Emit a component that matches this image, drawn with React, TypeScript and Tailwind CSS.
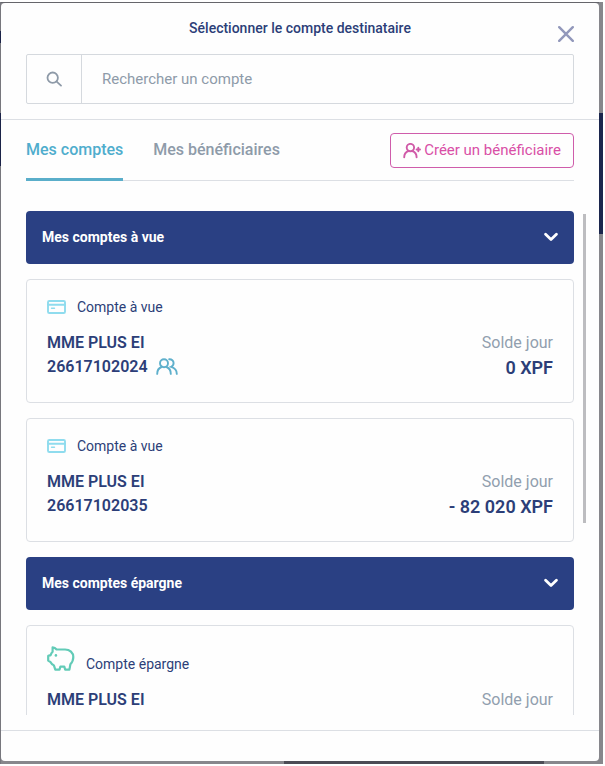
import React from "react";

type Account = {
  kind: "vue" | "epargne";
  label: string;
  owner: string;
  number: string;
  balance: string;
  shared?: boolean;
};

const currentAccounts: Account[] = [
  { kind: "vue", label: "Compte à vue", owner: "MME PLUS EI", number: "26617102024", balance: "0 XPF", shared: true },
  { kind: "vue", label: "Compte à vue", owner: "MME PLUS EI", number: "26617102035", balance: "- 82 020 XPF" },
];

const savingsAccounts: Account[] = [
  { kind: "epargne", label: "Compte épargne", owner: "MME PLUS EI", number: "", balance: "" },
];

function SearchIcon() {
  return (
    <svg className="size-4" viewBox="0 0 16 16" fill="none" stroke="#8e9aa8" strokeWidth="1.8" strokeLinecap="round" aria-hidden="true">
      <circle cx="6.7" cy="6.7" r="5.2" />
      <path d="M10.7 10.7 15 14.6" />
    </svg>
  );
}

function CloseIcon() {
  return (
    <svg className="size-4" viewBox="0 0 16 16" fill="none" stroke="#9298bb" strokeWidth="2.4" strokeLinecap="round" aria-hidden="true">
      <path d="M1.2 1.2 14.8 14.8M14.8 1.2 1.2 14.8" />
    </svg>
  );
}

function UserPlusIcon() {
  return (
    <svg className="h-4 w-[18px] shrink-0" viewBox="0 0 18 16" fill="none" stroke="#d05aa8" strokeWidth="1.9" strokeLinecap="round" aria-hidden="true">
      <circle cx="7.4" cy="4.6" r="3.7" />
      <path d="M1.2 14.2c0-3.200 1.600-5.200 4.200-6.200M13.600 14.2c0-3.200-1.600-5.200-4.200-6.200" />
      <path d="M13.600 6.500h3.400M15.300 4.800v3.400" />
    </svg>
  );
}

function UsersIcon() {
  return (
    <svg className="h-[18px] w-[22px]" viewBox="0 0 22 18" fill="none" stroke="#5fb0cc" strokeWidth="1.9" strokeLinecap="round" role="img" aria-label="Compte joint">
      <circle cx="8" cy="5.2" r="4" />
      <path d="M1.200 15.900c0-3.700 1.600-5.900 4.300-6.900M14.800 15.900c0-3.700-1.600-5.900-4.300-6.900" />
      <path d="M13.200 1.200c2.500-.2 4.400 1.600 4.400 3.900 0 1.700-.9 3-2.400 3.700 3.600 1 5.600 3.200 5.600 7.100" />
    </svg>
  );
}

function CardIcon() {
  return (
    <svg className="h-[14px] w-[19px]" viewBox="0 0 19 14" fill="none" stroke="#8fdcee" strokeWidth="1.9" strokeLinecap="round" aria-hidden="true">
      <rect x="1" y="1" width="17" height="12" rx="1.3" />
      <path d="M1 4.700h17" />
      <path d="M4.500 8.200h3" strokeWidth="1.4" />
    </svg>
  );
}

function PigIcon() {
  return (
    <svg className="h-[25px] w-7" viewBox="0 0 28 25" fill="none" stroke="#62cbb7" strokeWidth="2.2" strokeLinejoin="round" strokeLinecap="round" aria-hidden="true">
      <path d="M5.600 1.400C7.200 1.500 8.700 2.400 9.600 3.500H18c4.800 0 8.300 3.200 8.300 7.600 0 3-1 5.300-2.900 7.200l-1 5.300h-4.200l-.9-2.900h-3.900l-.9 2.900H8.300l-1.400-4.200c-1.500-.8-2.600-1.800-3.300-3.200L1.200 14.600V9.900l2.500-.8c.3-1.200.9-2.300 1.900-3.300Z" />
      <circle cx="8.900" cy="9.400" r="1.3" fill="#62cbb7" stroke="none" />
    </svg>
  );
}

function GroupHeader({ title }: { title: string }) {
  return (
    <button type="button" aria-expanded="true" className="flex h-[53px] w-full shrink-0 items-center justify-between rounded-[4px] bg-[#2a4083] px-4 pb-[2px] text-sm font-bold text-white">
      <span>{title}</span>
      <svg className="h-[10px] w-[14px]" viewBox="0 0 14 10" fill="none" stroke="currentColor" strokeWidth="2.8" strokeLinecap="round" strokeLinejoin="round" aria-hidden="true">
        <path d="M1.600 2.200 7 7.400l5.400-5.200" />
      </svg>
    </button>
  );
}

function AccountCard({ account }: { account: Account }) {
  return (
    <article className="shrink-0 rounded-[4px] border border-[#dcdfe4] px-5 pt-5 pb-[22px] text-[#2c3e78]">
      <div className="mb-[17px] flex items-end gap-[11px]">
        {account.kind === "vue" ? <CardIcon /> : <PigIcon />}
        <span className="text-sm leading-[14px]">{account.label}</span>
      </div>
      <div className="flex justify-between">
        <div className="font-semibold leading-6">
          <p>{account.owner}</p>
          <p className="flex h-6 items-center gap-2">
            {account.number}
            {account.shared && <UsersIcon />}
          </p>
        </div>
        <div className="text-right">
          <p className="leading-6 text-[#919fae]">Solde jour</p>
          <p className="text-lg leading-[25px] font-semibold">{account.balance}</p>
        </div>
      </div>
    </article>
  );
}

export default function App() {
  return (
    <div className="h-screen bg-white py-[2px] pr-[2px] font-['Roboto','Liberation_Sans',sans-serif]">
      <div className="flex h-full bg-[#87878c]">
        <div className="flex w-px shrink-0 flex-col bg-[#77777d]">
          <div className="mt-[29px] h-3 bg-[#1b2348]" />
          <div className="mt-[70px] h-[53px] bg-[#1b2348]" />
        </div>

        <div className="flex min-w-0 flex-1 flex-col">
          <div className="h-px shrink-0 bg-[#66666b]" />
          <main role="dialog" aria-label="Sélectionner le compte destinataire" className="flex min-h-0 flex-1 flex-col rounded-[4px] bg-[#fefefe]">
            <header className="relative shrink-0 border-b border-[#dcdfe4] px-[25px] py-[15px]">
              <h1 className="mb-4 text-center text-sm font-medium text-[#2c3e78]">Sélectionner le compte destinataire</h1>
              <button type="button" aria-label="Fermer" className="absolute top-[23px] right-[25px]">
                <CloseIcon />
              </button>
              <div className="flex h-[50px] rounded-[2px] border border-[#d5d9de]">
                <label htmlFor="search" aria-label="Rechercher" className="flex w-[55px] items-center justify-center border-r border-[#d5d9de]">
                  <SearchIcon />
                </label>
                <input id="search" type="text" placeholder="Rechercher un compte" className="min-w-0 flex-1 bg-transparent px-5 text-[15px] outline-none placeholder:text-[#8e9ba9]" />
              </div>
            </header>

            <nav className="mx-[25px] flex shrink-0 items-start justify-between border-b border-[#dcdfe4] pt-[13px]">
              <div role="tablist" className="-mb-px flex gap-[30px] font-medium">
                <button type="button" role="tab" aria-selected="true" className="h-12 border-b-3 border-[#5aaeca] pb-3 text-[#4fadcd]">
                  Mes comptes
                </button>
                <button type="button" role="tab" aria-selected="false" className="h-12 border-b-3 border-transparent pb-3 text-[#8e9ba9]">
                  Mes bénéficiaires
                </button>
              </div>
              <button type="button" className="flex h-[35px] items-center gap-[3px] rounded-[4px] border border-[#cf5cab] px-3 text-[15px] text-[#d94fa6]">
                <UserPlusIcon />
                Créer un bénéficiaire
              </button>
            </nav>

            <div className="relative mt-[30px] mb-[15px] min-h-0 flex-1">
              <div className="flex h-full flex-col gap-[15px] overflow-hidden px-[25px]">
                <GroupHeader title="Mes comptes à vue" />
                {currentAccounts.map((a) => (
                  <AccountCard key={a.number} account={a} />
                ))}
                <GroupHeader title="Mes comptes épargne" />
                {savingsAccounts.map((a) => (
                  <AccountCard key={a.label} account={a} />
                ))}
              </div>
              <div className="absolute top-[3px] right-[13px] h-[309px] w-[3px] bg-[#bdbdc0]" />
            </div>

            <footer className="h-[31px] shrink-0 border-t border-[#dcdfe4]" />
          </main>
          <div className="flex h-[3px] shrink-0 justify-center pl-[227px]">
            <div className="w-[260px] bg-[#4c4c55]" />
          </div>
        </div>

        <div className="flex w-1 shrink-0 flex-col">
          <div className="mt-[111px] h-[121px] bg-[#1b264d]" />
        </div>
      </div>
    </div>
  );
}
